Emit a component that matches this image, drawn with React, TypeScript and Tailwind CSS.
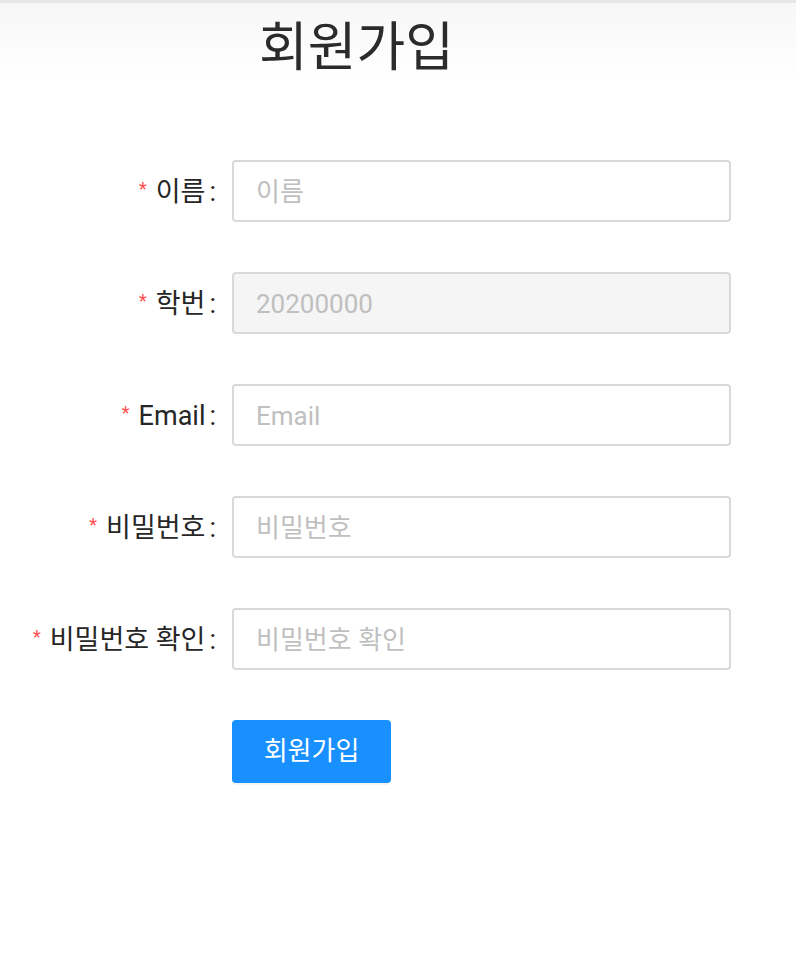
import React from "react";

const fields: { label: string; placeholder: string; value?: string; disabled?: boolean }[] = [
  { label: "이름", placeholder: "이름" },
  { label: "학번", placeholder: "학번", value: "20200000", disabled: true },
  { label: "Email", placeholder: "Email" },
  { label: "비밀번호", placeholder: "비밀번호" },
  { label: "비밀번호 확인", placeholder: "비밀번호 확인" },
];

export default function App() {
  return (
    <div
      className="min-h-[964px] w-[796px] bg-white text-[#262626]"
      style={{ fontFamily: 'Roboto, "Noto Sans CJK KR", sans-serif' }}
    >
      {/* header strip */}
      <div className="h-[3px] bg-[#e6e6e6]" />
      <div className="bg-gradient-to-b from-[#f7f7f7] to-white pl-[259px] pt-[12px]">
        <h1 className="text-[53px] leading-[67px] text-[#2b2b2b]">회원가입</h1>
      </div>

      {/* form */}
      <form className="mt-[78px] flex flex-col gap-[50px]">
        {fields.map((f) => (
          <div key={f.label} className="flex items-center">
            <label className="mt-[3px] flex w-[216px] items-center justify-end text-[27px] leading-none">
              <span className="mr-[9px] -mt-[8px] text-[18px] text-[#ff4d4f]">*</span>
              <span>{f.label}</span>
              <span className="ml-[4px]">:</span>
            </label>
            <input
              type="text"
              disabled={f.disabled}
              defaultValue={f.value}
              placeholder={f.placeholder}
              className={`ml-[16px] h-[62px] w-[499px] rounded-[4px] border-2 border-[#d9d9d9] px-[22px] pt-[2px] text-[26px] outline-none placeholder:text-[#bfbfbf] ${
                f.disabled ? "bg-[#f5f5f5] text-[#bfbfbf]" : "bg-white"
              }`}
            />
          </div>
        ))}
        <div className="pl-[232px]">
          <button
            type="button"
            className="h-[63px] w-[159px] rounded-[4px] bg-[#1890ff] text-[26px] text-white shadow-[0_2px_0_rgba(0,0,0,0.045)]"
          >
            회원가입
          </button>
        </div>
      </form>
    </div>
  );
}
